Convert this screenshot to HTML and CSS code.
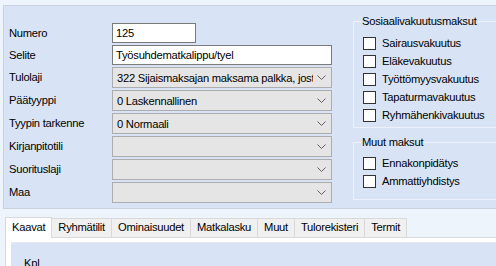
FILE: index.html
```html
<!DOCTYPE html>
<html lang="fi">
<head>
  <meta charset="UTF-8">
  <title>Tulolaji</title>
  <link rel="stylesheet" href="styles.css">
</head>
<body>
  <div id="top-panel">
    <div class="form">
      <div class="row">
        <span class="label">Numero</span>
        <div class="text-input short">125</div>
      </div>
      <div class="row">
        <span class="label">Selite</span>
        <div class="text-input">Työsuhdematkalippu/tyel</div>
      </div>
      <div class="row">
        <span class="label">Tulolaji</span>
        <div class="combo"><span class="value">322 Sijaismaksajan maksama palkka, jost</span><svg class="chevron" width="9" height="5" viewBox="0 0 9 5"><polyline points="0.5,0.5 4.5,4.5 8.5,0.5" /></svg></div>
      </div>
      <div class="row">
        <span class="label">Päätyyppi</span>
        <div class="combo"><span class="value">0 Laskennallinen</span><svg class="chevron" width="9" height="5" viewBox="0 0 9 5"><polyline points="0.5,0.5 4.5,4.5 8.5,0.5" /></svg></div>
      </div>
      <div class="row">
        <span class="label">Tyypin tarkenne</span>
        <div class="combo"><span class="value">0 Normaali</span><svg class="chevron" width="9" height="5" viewBox="0 0 9 5"><polyline points="0.5,0.5 4.5,4.5 8.5,0.5" /></svg></div>
      </div>
      <div class="row">
        <span class="label">Kirjanpitotili</span>
        <div class="combo"><span class="value"></span><svg class="chevron" width="9" height="5" viewBox="0 0 9 5"><polyline points="0.5,0.5 4.5,4.5 8.5,0.5" /></svg></div>
      </div>
      <div class="row">
        <span class="label">Suorituslaji</span>
        <div class="combo"><span class="value"></span><svg class="chevron" width="9" height="5" viewBox="0 0 9 5"><polyline points="0.5,0.5 4.5,4.5 8.5,0.5" /></svg></div>
      </div>
      <div class="row">
        <span class="label">Maa</span>
        <div class="combo"><span class="value"></span><svg class="chevron" width="9" height="5" viewBox="0 0 9 5"><polyline points="0.5,0.5 4.5,4.5 8.5,0.5" /></svg></div>
      </div>
    </div>

    <div class="side">
      <fieldset class="group social">
        <legend>Sosiaalivakuutusmaksut</legend>
        <div class="check"><span class="box"></span>Sairausvakuutus</div>
        <div class="check"><span class="box"></span>Eläkevakuutus</div>
        <div class="check"><span class="box"></span>Työttömyysvakuutus</div>
        <div class="check"><span class="box"></span>Tapaturmavakuutus</div>
        <div class="check"><span class="box"></span>Ryhmähenkivakuutus</div>
      </fieldset>
      <fieldset class="group other">
        <legend>Muut maksut</legend>
        <div class="check"><span class="box"></span>Ennakonpidätys</div>
        <div class="check"><span class="box"></span>Ammattiyhdistys</div>
      </fieldset>
    </div>
  </div>

  <div id="tabs">
    <div class="tab-strip">
      <span class="tab active">Kaavat</span>
      <span class="tab">Ryhmätilit</span>
      <span class="tab">Ominaisuudet</span>
      <span class="tab">Matkalasku</span>
      <span class="tab">Muut</span>
      <span class="tab">Tulorekisteri</span>
      <span class="tab">Termit</span>
    </div>
    <div class="tab-page">
      <div class="tab-inner">
        <span class="field-label">Kpl</span>
      </div>
    </div>
  </div>
</body>
</html>
```

FILE: styles.css
```css
html, body {
  margin: 0;
  padding: 0;
  width: 496px;
  height: 266px;
  overflow: hidden;
  background: #eef4fc;
  font-family: 'Liberation Sans', Arial, sans-serif;
  font-size: 11.2px;
  letter-spacing: -0.25px;
  color: #000;
}
#top-panel {
  display: flex;
  margin: 5px 0 0 3px;
  width: 520px;
  height: 202px;
  background: #d8e4f6;
  border: 1px solid #c9d2de;
}
.form {
  display: flex;
  flex-direction: column;
  gap: 2px;
  padding: 17px 0 0 5px;
}
.row {
  display: flex;
  align-items: center;
}
.label {
  width: 103px;
  line-height: 15px;
}
.text-input {
  box-sizing: border-box;
  width: 220px;
  height: 20px;
  line-height: 18px;
  padding: 0 3px;
  background: #fff;
  border: 1px solid #7a7a7a;
}
.text-input.short {
  width: 84px;
}
.combo {
  box-sizing: border-box;
  display: flex;
  align-items: center;
  justify-content: space-between;
  width: 220px;
  height: 21px;
  padding: 0 4px 0 4px;
  background: #e5e5e5;
  border: 1px solid #adadad;
}
.combo .value {
  white-space: nowrap;
  overflow: hidden;
}
.chevron {
  flex: none;
  margin: 0 1px 0 4px;
  fill: none;
  stroke: #606060;
  stroke-width: 1;
}
.side {
  display: flex;
  flex-direction: column;
  padding: 8px 0 0 21px;
}
.group {
  width: 160px;
  margin: 0;
  padding: 5px 0 3px 9px;
  border: 1px solid #eef2f8;
}
.group legend {
  padding: 0 1px;
  margin-left: -2px;
  line-height: 15px;
}
.group.other {
  margin-top: 7px;
  padding: 4px 0 9px 9px;
}
.check {
  display: flex;
  align-items: center;
  height: 18px;
  gap: 6px;
}
.check .box {
  box-sizing: border-box;
  width: 13px;
  height: 13px;
  background: #fff;
  border: 1px solid #333;
}
#tabs {
  margin: 7px 0 0 5px;
}
.tab-strip {
  display: flex;
  align-items: flex-end;
  height: 21px;
}
.tab {
  box-sizing: border-box;
  height: 19px;
  line-height: 17px;
  padding: 0 6px;
  background: #f0f0f0;
  border: 1px solid #d9d9d9;
  border-bottom: none;
  margin-left: -1px;
}
.tab.active {
  height: 21px;
  line-height: 19px;
  margin-left: 0;
  padding: 0 6px;
  background: #fff;
  position: relative;
  z-index: 1;
  margin-bottom: -1px;
}
.tab-page {
  background: #fff;
  border-top: 1px solid #d9d9d9;
  border-left: 1px solid #d9d9d9;
  padding: 4px 0 0 5px;
  height: 40px;
}
.tab-inner {
  height: 100%;
  background: #d8e4f6;
  border-top: 1px solid #e3e8ef;
  padding: 13px 0 0 13px;
}
.field-label {
  line-height: 15px;
}
```
